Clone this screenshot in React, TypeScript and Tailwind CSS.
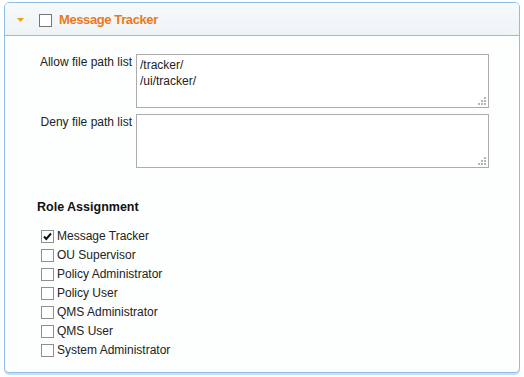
const roles = [
  { name: "Message Tracker", checked: true },
  { name: "OU Supervisor", checked: false },
  { name: "Policy Administrator", checked: false },
  { name: "Policy User", checked: false },
  { name: "QMS Administrator", checked: false },
  { name: "QMS User", checked: false },
  { name: "System Administrator", checked: false },
];

function Box({ checked }: { checked: boolean }) {
  return (
    <span className="relative inline-block w-[13px] h-[13px] border border-[#8f8f8f] bg-white shrink-0">
      {checked && (
        <svg viewBox="0 0 13 13" className="absolute -left-px -top-px w-[13px] h-[13px]">
          <path d="M3 6.5 L5.3 9 L10 3.5" fill="none" stroke="#111" strokeWidth="2" />
        </svg>
      )}
    </span>
  );
}

function Grip() {
  return (
    <svg viewBox="0 0 8 8" className="absolute right-[2px] bottom-[2px] w-[8px] h-[8px]">
      <g fill="#b5b5b5">
        <rect x="6" y="0" width="2" height="2" />
        <rect x="3" y="3" width="2" height="2" />
        <rect x="6" y="3" width="2" height="2" />
        <rect x="0" y="6" width="2" height="2" />
        <rect x="3" y="6" width="2" height="2" />
        <rect x="6" y="6" width="2" height="2" />
      </g>
    </svg>
  );
}

function PathField({ label, lines }: { label: string; lines: string[] }) {
  return (
    <div className="flex items-start">
      <div className="w-[131px] pr-[4px] text-right text-[12px] leading-[16px] text-[#222]">{label}</div>
      <div className="relative w-[353px] h-[54px] border border-[#acacac] bg-white px-[3px] pt-[2px] text-[12px] leading-[16px] text-[#222]">
        {lines.map((l) => (
          <div key={l}>{l}</div>
        ))}
        <Grip />
      </div>
    </div>
  );
}

export default function App() {
  return (
    <div className="w-[524px] h-[377px] bg-white pt-[2px] pl-[4px] font-['Liberation_Sans',Arial,sans-serif]">
      <div className="w-[516px] h-[371px] border border-[#8fbde6] rounded-[5px] bg-[#fdfefe] overflow-hidden shadow-[0_2px_0_#c9dff0]">
        <div className="h-[33px] pt-[2px] flex items-center border-b border-[#8fbde6] bg-[linear-gradient(#f7fafb,#eef3f6)]">
          <svg viewBox="0 0 7 4" className="ml-[12px] w-[7px] h-[4px] -mt-[1px]">
            <path d="M0 0 H7 L3.5 4 Z" fill="#e8a10e" />
          </svg>
          <span className="ml-[15px] w-[13px] h-[13px] border border-[#777] bg-white" />
          <span className="ml-[7px] text-[13px] font-bold tracking-[-0.4px] text-[#e87a1c]">Message Tracker</span>
        </div>
        <div className="pt-[18px] flex flex-col gap-[6px]">
          <PathField label="Allow file path list" lines={["/tracker/", "/ui/tracker/"]} />
          <PathField label="Deny file path list" lines={[]} />
        </div>
        <div className="pl-[32px] pt-[30px]">
          <div className="text-[12.5px] font-bold text-[#111]">Role Assignment</div>
          <div className="mt-[10px] pl-[4px] flex flex-col">
            {roles.map((r) => (
              <div key={r.name} className="h-[19px] flex items-center gap-[3px] text-[12px] text-[#222]">
                <Box checked={r.checked} />
                <span>{r.name}</span>
              </div>
            ))}
          </div>
        </div>
      </div>
    </div>
  );
}
